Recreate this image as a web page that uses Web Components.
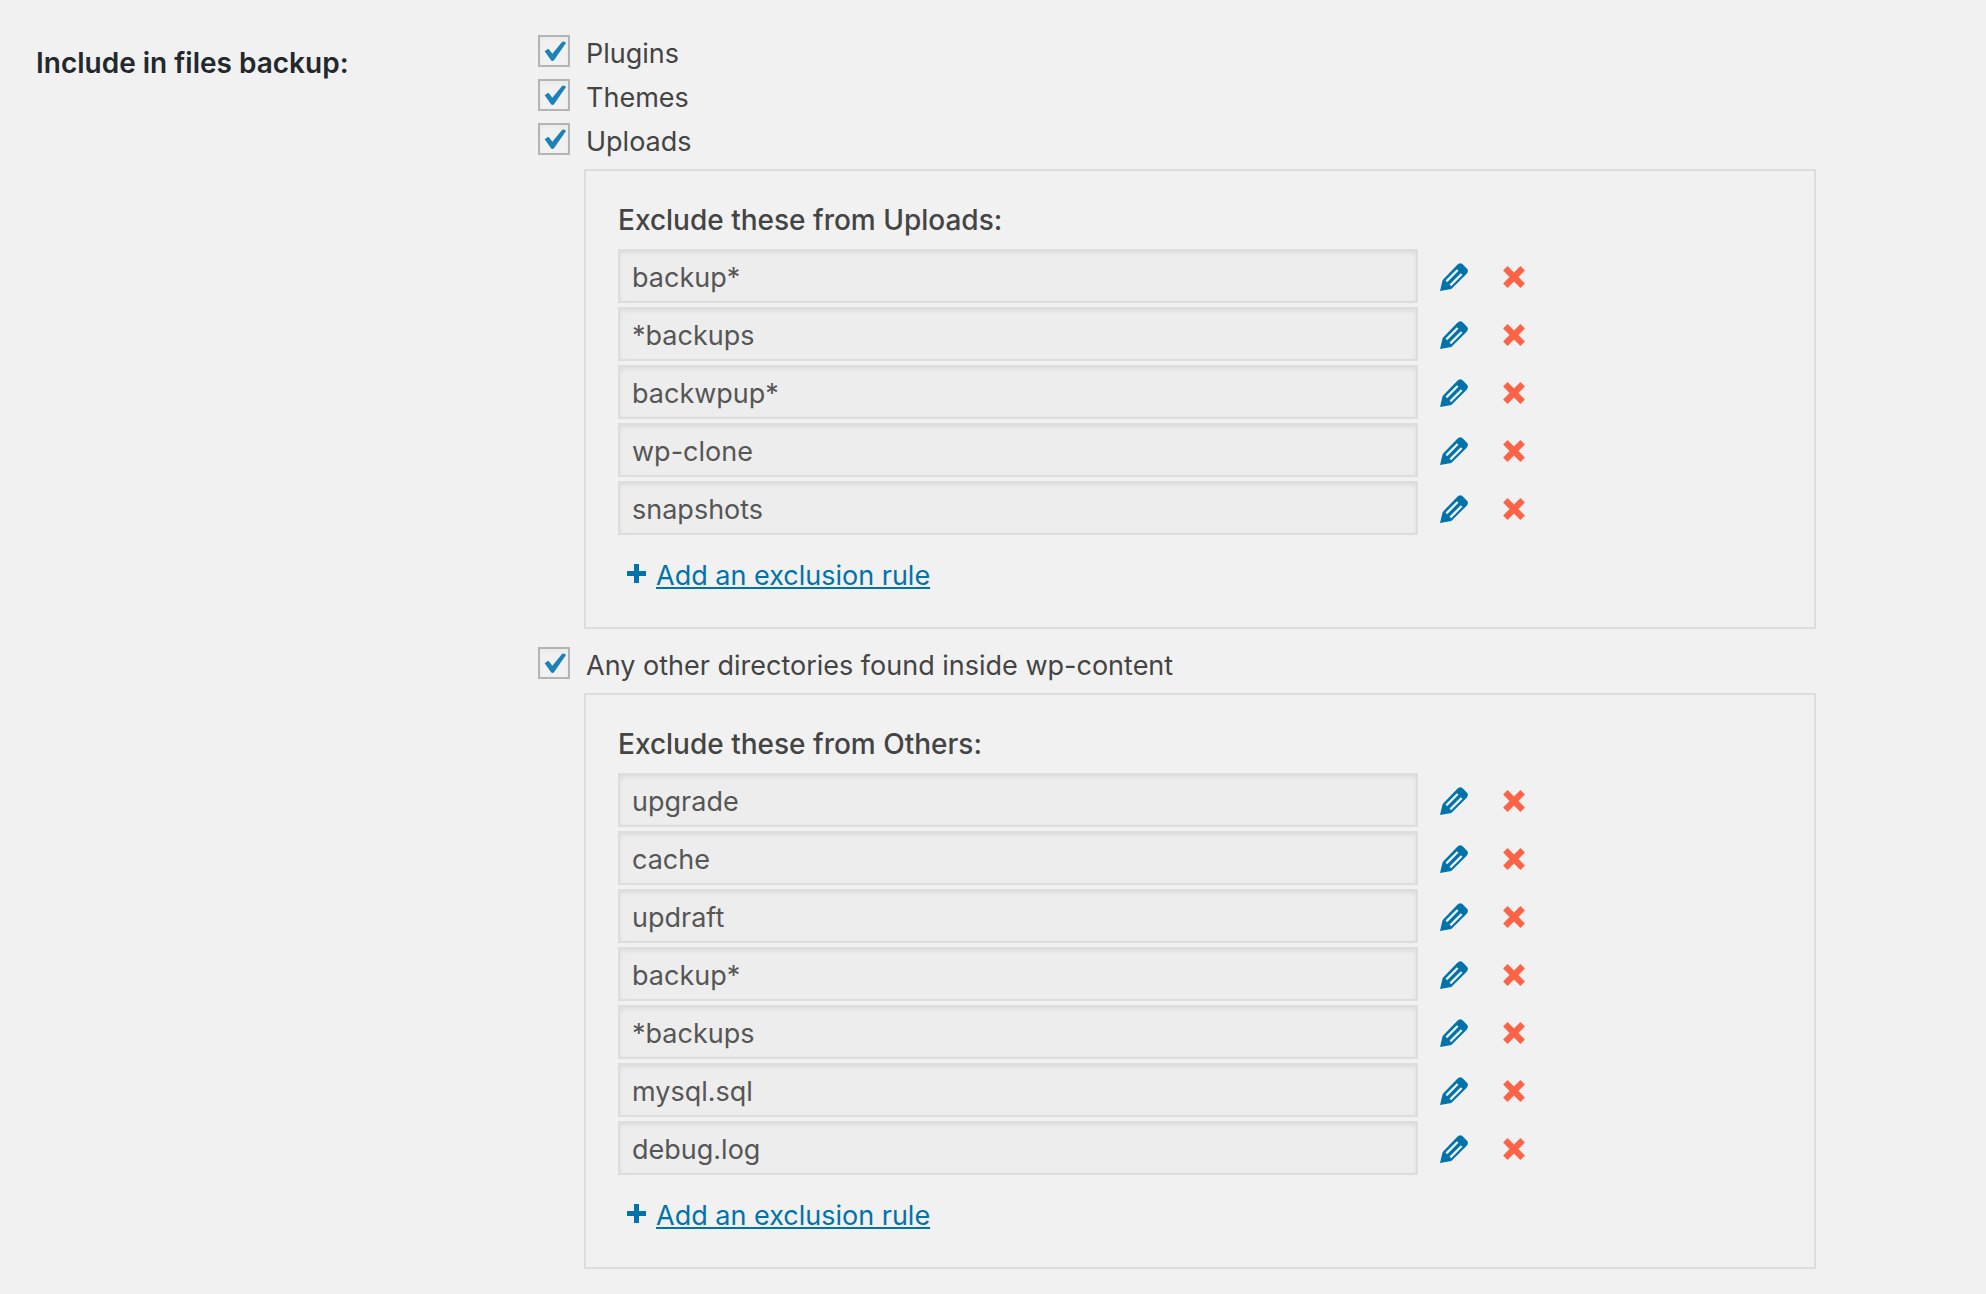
<!DOCTYPE html>
<html lang="en">
<head>
<meta charset="utf-8">
<title>Files backup settings</title>
<style>
  body { margin: 0; background: #f1f1f1; color: #444; font: 27px/32px Inter, "Noto Sans", sans-serif; }
</style>
</head>
<body>
<settings-row label="Include in files backup:">
  <check-option>Plugins</check-option>
  <check-option>Themes</check-option>
  <check-option>Uploads</check-option>
  <exclude-panel heading="Exclude these from Uploads:">
    <exclude-rule value="backup*"></exclude-rule>
    <exclude-rule value="*backups"></exclude-rule>
    <exclude-rule value="backwpup*"></exclude-rule>
    <exclude-rule value="wp-clone"></exclude-rule>
    <exclude-rule value="snapshots"></exclude-rule>
  </exclude-panel>
  <check-option>Any other directories found inside wp-content</check-option>
  <exclude-panel heading="Exclude these from Others:">
    <exclude-rule value="upgrade"></exclude-rule>
    <exclude-rule value="cache"></exclude-rule>
    <exclude-rule value="updraft"></exclude-rule>
    <exclude-rule value="backup*"></exclude-rule>
    <exclude-rule value="*backups"></exclude-rule>
    <exclude-rule value="mysql.sql"></exclude-rule>
    <exclude-rule value="debug.log"></exclude-rule>
  </exclude-panel>
</settings-row>
<script>
class BaseElement extends HTMLElement {
  connectedCallback() {
    if (this.shadowRoot) return;
    this.attachShadow({ mode: 'open' }).innerHTML =
      '<style>*{box-sizing:border-box}' + this.constructor.css + '</style>' + this.render();
  }
}

customElements.define('settings-row', class extends BaseElement {
  static css = `
    :host { display: grid; grid-template-columns: 502px 1fr; padding: 35px 170px 16px 36px; }
    h2 { margin: 0; padding-top: 12px; font-size: 28px; line-height: 32px; font-weight: 600; color: #23282d; }
    .options { display: flex; flex-direction: column; gap: 12px; min-width: 0; }
  `;
  render() {
    return `<h2>${this.getAttribute('label')}</h2><div class="options"><slot></slot></div>`;
  }
});

customElements.define('check-option', class extends BaseElement {
  static css = `
    :host { display: block; }
    label { display: flex; align-items: flex-start; gap: 16px; }
    .box { display: grid; flex: none; width: 32px; height: 32px; }
    input { grid-area: 1 / 1; appearance: none; width: 32px; height: 32px; margin: 0; border: 2px solid #b4b4b4; box-shadow: inset 0 2px 4px rgba(0,0,0,.04); }
    svg { grid-area: 1 / 1; width: 32px; height: 32px; fill: #1c82b8; visibility: hidden; pointer-events: none; }
    input:checked + svg { visibility: visible; }
    .text { height: 32px; line-height: 38px; }
  `;
  render() {
    return `<label><span class="box"><input type="checkbox" checked>
      <svg viewBox="0 0 96 96" aria-hidden="true"><path d="M20 49 28 43Q31 41 34 44L43 56 72 21Q77 17 84 24L49 74Q44 81 39 76Z"/></svg></span>
      <span class="text"><slot></slot></span></label>`;
  }
});

customElements.define('exclude-panel', class extends BaseElement {
  static css = `
    :host { display: block; margin: 2px 0 6px 46px; padding: 33px 32px 35px; border: 2px solid #ddd; }
    h3 { margin: 0 0 13px; font-size: 28px; line-height: 32px; font-weight: 500; }
    .rules { display: flex; flex-direction: column; gap: 4px; }
    .add { display: flex; align-items: center; gap: 10px; margin-top: 25px; padding-left: 9px; }
    svg { width: 19px; height: 19px; fill: #0073aa; flex: none; margin-bottom: 6px; }
    a { color: #0073aa; text-decoration: underline; text-decoration-thickness: 2px; text-underline-offset: 2px; text-decoration-skip-ink: none; }
  `;
  render() {
    return `<h3>${this.getAttribute('heading')}</h3>
      <div class="rules"><slot></slot></div>
      <div class="add"><svg viewBox="0 0 19 19" aria-hidden="true"><path d="M7 0h5v7h7v5h-7v7H7v-7H0V7h7z"/></svg><a href="#">Add an exclusion rule</a></div>`;
  }
});

customElements.define('exclude-rule', class extends BaseElement {
  static css = `
    :host { display: flex; align-items: center; }
    input { flex: 0 1 800px; min-width: 0; height: 54px; margin: 0; padding: 2px 12px 0; border: 2px solid #ddd; border-radius: 0; background: #ededed; color: #565656; font: inherit; box-shadow: inset 0 2px 4px rgba(0,0,0,.07); outline: 0; }
    button { flex: none; display: grid; place-items: center; width: 60px; height: 40px; margin: 0; padding: 2px 0 0; border: 0; background: none; cursor: pointer; }
    .edit { margin-left: 6px; }
    svg { display: block; }
  `;
  render() {
    const value = this.getAttribute('value');
    return `<input type="text" readonly value="${value}" aria-label="Exclusion rule">
      <button class="edit" type="button" aria-label="Edit"><svg width="28" height="28" viewBox="0 0 84 84"><path fill="#0073aa" d="M0 84 8 51 52 5Q60-3 67 3L81 17Q87 23 80 32L34 78Z"/><path stroke="#f1f1f1" stroke-width="7" d="M19 55 53 21M31 67 65 33"/></svg></button>
      <button class="remove" type="button" aria-label="Delete"><svg width="22" height="22" viewBox="0 0 66 66"><path fill="none" stroke="#ff6347" stroke-width="19" d="M7 7 59 59M59 7 7 59"/></svg></button>`;
  }
});
</script>
</body>
</html>
